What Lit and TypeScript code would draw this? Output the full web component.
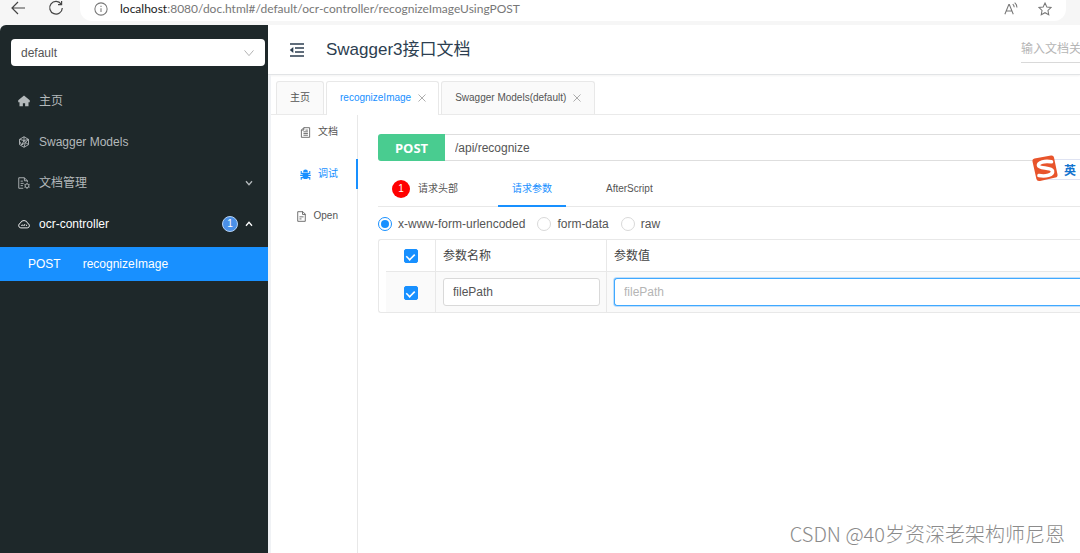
import { LitElement, html, css, svg } from "lit";
import { customElement, state } from "lit/decorators.js";

const icons = {
  back: svg`<path d="M15 8H2M8 2 2 8l6 6" />`,
  reload: svg`<path d="M13.2 4.2A6.3 6.3 0 1 0 14.3 8M13.6 1v3.6H10" />`,
  info: svg`<circle cx="8" cy="8" r="7" /><path d="M8 7v4.5M8 4.3v1.4" />`,
  aloud: svg`<path d="M1 14 5.5 3h.6l4.5 11M2.6 10.3H9M10 2.5q1.6 1.4 1.7 3.6M12.2.8q2.5 2 2.6 5.6" />`,
  star: svg`<path d="m8 1.2 2.1 4.4 4.8.7-3.5 3.4.9 4.8L8 12.2l-4.3 2.3.9-4.8L1.1 6.3l4.8-.7z" />`,
  down: svg`<path d="m2 4.500 6 7 6-7" />`,
  up: svg`<path d="m2 11.500 6-7 6 7" />`,
  close: svg`<path d="m1 1 14 14M15 1 1 15" />`,
  home: svg`<path fill="currentColor" stroke="none" d="M8 .5.3 7v2.500H2V15h4.500v-4h3v4H14V9.500h1.700V7z" />`,
  models: svg`<path d="m8 1 6 3.500v7L8 15l-6-3.500v-7zM8 1v5l6-1.500M2 4.500 8 6l-3 6-3-5M14 11.500 10 8.500 8 15M5 12l5-3.500L8 6M10 8.500l4-4" />`,
  docSetting: svg`<path d="M7 15H1V1H8.500l4 4V7M8.500 1v4h4M3.500 5.500h3M3.500 8.500h4M3.500 11.500h3" /><circle cx="12" cy="11.800" r="2.600" /><path d="M12 8v1.200M12 14.400v1.400M8.600 9.800l1.200.700M14.200 13l1.200.700M15.400 9.800 14.200 10.500M9.800 13l-1.200.700" />`,
  cloud: svg`<path d="M3.800 13.200h8.600a3 3 0 0 0 .6-5.900A5.200 5.200 0 0 0 3 7a3.200 3.200 0 0 0 .8 6.200zM4.500 10.600 5.800 9l1.200 1.600M8.200 10.600V9h1.500M11.400 9v1.600" />`,
  fold: svg`<path d="M1 2h14M6 6h9M6 10h9M1 14h14" /><path fill="currentColor" stroke="none" d="M4.300 5v6L.8 8z" />`,
  doc: svg`<path d="M5.500 1H14v14H2V4.500zM5.500 1v3.500H2M5 7h6.500M5 9.500h6.500M5 12h6.500M8 4.500h3.500" />`,
  bug: svg`<path fill="currentColor" stroke="none" d="M4.500 4.200a3.500 3.500 0 0 1 7 0zM3.800 5.200h8.400v5.300a4.200 4.200 0 0 1-8.400 0z" /><path stroke-width="1.600" d="M1.800 3v3.500H4.500M14.200 3v3.500H11.500M.300 9.300h15.400M1.800 15.500v-3h3M14.200 15.500v-3h-3" />`,
  file: svg`<path d="M2.500 1H10l3.500 3.500V15h-11zM9.500 1v4h4M5 8.500h6M5 11.500h3" />`,
};

const icon = (name: keyof typeof icons, cls = "") =>
  html`<svg class="icon ${cls}" viewBox="0 0 16 16" aria-hidden="true">${icons[name]}</svg>`;

@customElement("app-root")
export class AppRoot extends LitElement {
  @state() private bodyType = "x-www-form-urlencoded";

  static styles = css`
    * { box-sizing: border-box; }
    :host {
      display: flex;
      flex-direction: column;
      position: relative;
      min-height: 100vh;
      overflow: hidden;
      background: #f5f6f7;
      color: #555;
      font: 12px/18px "Liberation Sans", "Noto Sans CJK SC", sans-serif;
    }
    a { color: inherit; text-decoration: none; }
    button, input, select { font: inherit; color: inherit; margin: 0; }
    button { border: 0; padding: 0; background: none; display: inline-flex; align-items: center; }
    .icon { width: 12px; height: 12px; flex: none; fill: none; stroke: currentColor; stroke-width: 1.2; }
    .small { width: 8px; height: 8px; }
    .bold { stroke-width: 2.6; }
    .large { width: 16px; height: 16px; }
    .mid { width: 14px; height: 14px; }
    .fold { stroke-width: 1.5; }

    .browser { display: flex; align-items: flex-start; height: 25px; padding: 0 14px 0 10px; color: #444; background: #f6f6f6; }
    .nav { display: flex; gap: 22px; width: 70px; }
    .address { flex: 1; display: flex; align-items: center; height: 21px; padding: 0 14px 4px 14px; gap: 12px; background: #fff; border-radius: 0 0 12px 12px; color: #777; }
    .url { flex: 1; min-width: 0; border: 0; font: 12px/16px Lato, sans-serif; white-space: nowrap; }
    .url b { font-weight: 400; color: #222; }
    .tools { display: flex; gap: 20px; }

    .app { flex: 1; display: flex; min-height: 0; }
    .side { width: 268px; flex: none; background: #1e282a; border-top-left-radius: 6px; color: #b4b9bb; }
    .group { display: flex; align-items: center; position: relative; margin: 14px 3px 14px 11px; }
    .group select { appearance: none; width: 100%; height: 27px; border: 0; border-radius: 4px; padding: 0 10px; background: #fff; color: #555; }
    .group .icon { position: absolute; right: 10px; color: #aaa; }
    .item { display: flex; align-items: center; gap: 9px; height: 41px; padding: 0 15px 0 18px; }
    .item .label { flex: 1; }
    .open { color: #fff; }
    .count { width: 16px; height: 16px; border-radius: 8px; font-size: 10px; line-height: 14px; text-align: center; background: #4a90e8; border: 1px solid #b5d3f5; color: #fff; margin-right: -2px; }
    .leaf { display: flex; align-items: center; height: 34px; margin-top: 3px; padding-left: 28px; gap: 22px; background: #1890ff; color: #fff; }

    .main { flex: 1; min-width: 0; display: flex; flex-direction: column; background: #fff; }
    .header { display: flex; align-items: center; height: 50px; padding-left: 21px; gap: 21px; border-bottom: 1px solid #e2e4e6; box-shadow: 0 1px 2px #0000000d; color: #2c3e50; }
    h1 { flex: 1; margin: 0; font-size: 17px; line-height: 24px; font-weight: 400; }
    .search { width: 59px; height: 27px; border: 0; border-bottom: 1px solid #d9d9d9; padding: 0; outline: 0; background: none; }
    input::placeholder { color: #b5b5b5; opacity: 1; }
    .body { flex: 1; display: flex; flex-direction: column; border-left: 3px solid #f0f2f5; }
    .pages { display: flex; gap: 2px; margin-top: 6px; padding-left: 5px; border-bottom: 1px solid #eaeaea; font-size: 10px; }
    .page { display: flex; align-items: center; gap: 7px; height: 33px; padding: 0 13px; background: #fafafa; border: 1px solid #e8e8e8; border-bottom: 0; border-radius: 3px 3px 0 0; }
    .page button { color: #777; }
    .page.current { background: #fff; color: #1890ff; margin-bottom: -1px; height: 34px; padding: 0 12px 1px 13px; }

    .work { flex: 1; display: flex; min-width: 0; }
    .modes { width: 87px; flex: none; display: flex; flex-direction: column; gap: 12px; padding-top: 2px; border-right: 1px solid #e8e8e8; font-size: 10px; }
    .mode { display: flex; align-items: center; justify-content: flex-end; gap: 7px; height: 30px; padding-right: 19px; }
    .mode .icon { width: 11px; height: 11px; }
    .mode.current { color: #1890ff; border-right: 2px solid #1890ff; margin-right: -1px; padding-right: 18px; }
    .panel { flex: 1; min-width: 0; padding: 19px 0 0 20px; }
    .request { display: flex; height: 27px; }
    .method { width: 67px; justify-content: center; border-radius: 3px 0 0 3px; background: #49cc90; color: #fff; font: 700 13px/18px "Open Sans", sans-serif; }
    .path { flex: 1; min-width: 0; border: 1px solid #dedede; border-width: 1px 0; padding: 0 10px; outline: 0; }
    .sections { display: flex; gap: 26px; height: 46px; padding-top: 10px; border-bottom: 1px solid #e8e8e8; font-size: 10px; }
    .section { display: flex; align-items: center; gap: 8px; height: 36px; padding: 0 14px; }
    .section.current { color: #1890ff; border-bottom: 2px solid #1890ff; padding-top: 2px; }
    .alert { width: 18px; height: 18px; border-radius: 9px; background: #f00; color: #fff; line-height: 18px; text-align: center; }
    .types { display: flex; gap: 12px; height: 32px; align-items: center; padding-top: 2px; }
    .types label { display: flex; align-items: center; gap: 6px; }
    .types input { appearance: none; width: 14px; height: 14px; border: 1px solid #d9d9d9; border-radius: 7px; display: grid; place-items: center; }
    .types input:checked { border-color: #1890ff; }
    .types input:checked::after { content: ""; width: 8px; height: 8px; border-radius: 4px; background: #1890ff; }
    .frame { padding-left: 7px; border: 1px solid #e8e8e8; border-right: 0; border-radius: 3px 0 0 3px; }
    table { width: 100%; border-collapse: separate; border-spacing: 0; table-layout: fixed; }
    th, td { text-align: left; font-weight: 400; padding: 0 7px; border-left: 1px solid #e8e8e8; }
    th { height: 32px; color: #444; border-bottom: 1px solid #e8e8e8; }
    td { height: 40px; background: #fafafa; }
    .tick { width: 49px; text-align: center; border-left: 0; }
    .name { width: 171px; padding-right: 6px; }
    .value { padding-right: 0; }
    .tick input { appearance: none; width: 14px; height: 14px; border-radius: 2px; border: 1px solid #ccc; display: inline-grid; justify-items: center; vertical-align: middle; }
    .tick input:checked { background: #1890ff; border-color: #1890ff; }
    .tick input:checked::after { content: ""; width: 5px; height: 8px; margin-top: 1px; border: solid #fff; border-width: 0 2px 2px 0; transform: rotate(45deg) scale(0.8); }
    .field { display: block; width: 100%; height: 28px; border: 1px solid #d9d9d9; border-radius: 3px; padding: 0 9px; background: #fff; outline: 0; }
    .focused { border-color: #40a9ff; border-right: 0; border-radius: 3px 0 0 3px; box-shadow: 0 0 0 1px #1890ff40; }

    .ime { position: absolute; z-index: 1; top: 154px; right: 0; display: flex; align-items: center; gap: 4px; padding-right: 4px; color: #1273cf; font-weight: 700; }
    .ime::before { content: ""; position: absolute; z-index: -1; inset: 5px 0 4px 14px; background: #fff; border: 1px solid #dfe3f2; border-right: 0; }
    .ime svg { width: 30px; height: 30px; }
    .ime span { padding-top: 4px; }
    .mark { position: absolute; right: 15px; bottom: 4px; color: #8b8b8b; font: 300 20px/30px "Noto Sans CJK SC", sans-serif; white-space: nowrap; }
  `;

  render() {
    return html`
      <div class="browser">
        <div class="nav">
          <button aria-label="Back">${icon("back", "large")}</button>
          <button aria-label="Reload">${icon("reload", "large")}</button>
        </div>
        <div class="address">
          ${icon("info", "mid")}
          <span class="url"><b>localhost</b>:8080/doc.html#/default/ocr-controller/recognizeImageUsingPOST</span>
          <div class="tools">
            <button aria-label="Read aloud">${icon("aloud", "mid")}</button>
            <button aria-label="Favorite">${icon("star", "mid")}</button>
          </div>
        </div>
      </div>
      <div class="app">
        <nav class="side">
          <div class="group">
            <select aria-label="group"><option>default</option></select>
            ${icon("down")}
          </div>
          <a class="item" href="#home">${icon("home")}<span class="label">主页</span></a>
          <a class="item" href="#models">${icon("models")}<span class="label">Swagger Models</span></a>
          <a class="item" href="#docs">${icon("docSetting")}<span class="label">文档管理</span>${icon("down", "small bold")}</a>
          <a class="item open" href="#ocr">${icon("cloud")}<span class="label">ocr-controller</span><span class="count">1</span>${icon("up", "small bold")}</a>
          <a class="leaf" href="#recognize"><span>POST</span><span>recognizeImage</span></a>
        </nav>
        <main class="main">
          <header class="header">
            <button aria-label="Collapse menu">${icon("fold", "large fold")}</button>
            <h1>Swagger3接口文档</h1>
            <input class="search" aria-label="搜索" placeholder="输入文档关键字搜索" />
          </header>
          <div class="body">
            <div class="pages">
              <a class="page" href="#home">主页</a>
              <div class="page current"><a href="#recognize">recognizeImage</a><button aria-label="Close">${icon("close", "small")}</button></div>
              <div class="page"><a href="#models">Swagger Models(default)</a><button aria-label="Close">${icon("close", "small")}</button></div>
            </div>
            <div class="work">
              <nav class="modes">
                <a class="mode" href="#doc">${icon("doc")}文档</a>
                <a class="mode current" href="#debug">${icon("bug")}调试</a>
                <a class="mode" href="#open">${icon("file")}Open</a>
              </nav>
              <section class="panel">
                <div class="request">
                  <button class="method">POST</button>
                  <input class="path" aria-label="URL" .value=${"/api/recognize"} />
                </div>
                <div class="sections">
                  <a class="section" href="#headers"><span class="alert">1</span>请求头部</a>
                  <a class="section current" href="#params">请求参数</a>
                  <a class="section" href="#script">AfterScript</a>
                </div>
                <div class="types">
                  ${["x-www-form-urlencoded", "form-data", "raw"].map(
                    (t) => html`<label><input type="radio" name="type" .checked=${this.bodyType === t} @change=${() => (this.bodyType = t)} />${t}</label>`
                  )}
                </div>
                <div class="frame">
                  <table>
                    <thead>
                      <tr>
                        <th class="tick"><input type="checkbox" aria-label="全选" checked /></th>
                        <th class="name">参数名称</th>
                        <th class="value">参数值</th>
                      </tr>
                    </thead>
                    <tbody>
                      <tr>
                        <td class="tick"><input type="checkbox" aria-label="filePath" checked /></td>
                        <td class="name"><input class="field" aria-label="参数名称" .value=${"filePath"} /></td>
                        <td class="value"><input class="field focused" aria-label="参数值" placeholder="filePath" /></td>
                      </tr>
                    </tbody>
                  </table>
                </div>
              </section>
            </div>
          </div>
        </main>
      </div>
      <div class="ime">
        <svg viewBox="0 0 30 30" aria-hidden="true">
          <path fill="#e8542b" d="M4.500 4.500 21 1.500q2.500-.4 3 2l3.500 17q.4 2.500-2 3L10 27q-3 .6-3.600-2L2.500 7.500q-.4-2.500 2-3z" />
          <path fill="none" stroke="#fff" stroke-width="3.600" stroke-linecap="round" d="M21.500 7.800C15 6.500 8 8.200 8.500 11.500c.5 3.500 13 1.500 14 5.500.8 4-7 5.800-13.500 4.500" />
        </svg>
        <span>英</span>
      </div>
      <div class="mark">CSDN @40岁资深老架构师尼恩</div>
    `;
  }
}
